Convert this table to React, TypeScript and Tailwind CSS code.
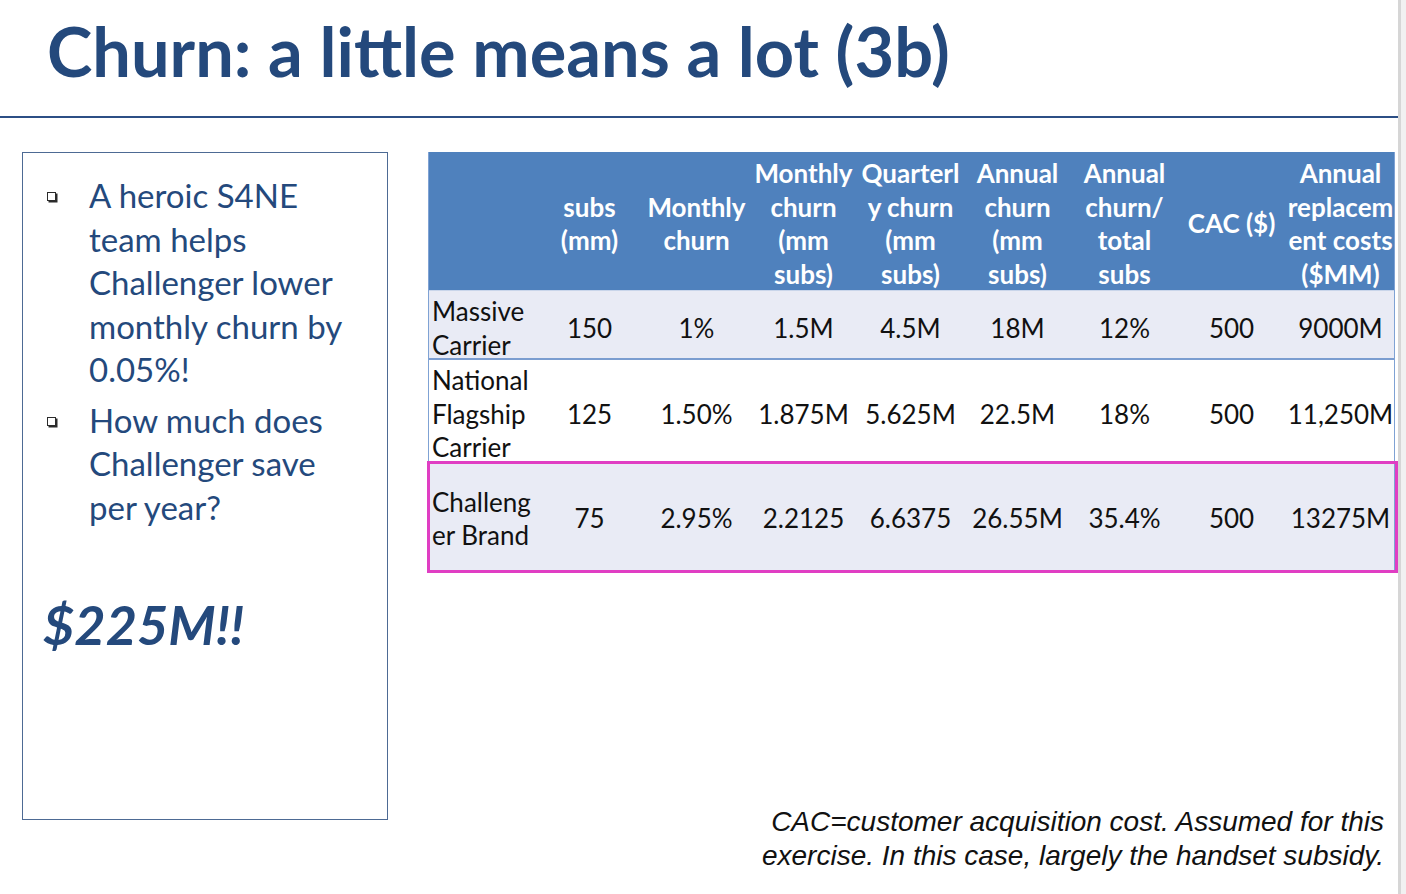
import React from "react";

const headers: string[][] = [
  [],
  ["subs", "(mm)"],
  ["Monthly", "churn"],
  ["Monthly", "churn", "(mm", "subs)"],
  ["Quarterl", "y churn", "(mm", "subs)"],
  ["Annual", "churn", "(mm", "subs)"],
  ["Annual", "churn/", "total", "subs"],
  ["CAC ($)"],
  ["Annual", "replacem", "ent costs", "($MM)"],
];

const rows: { label: string[]; values: string[]; h: string; bg: string }[] = [
  {
    label: ["Massive", "Carrier"],
    values: ["150", "1%", "1.5M", "4.5M", "18M", "12%", "500", "9000M"],
    h: "h-[69px] border-b-2 border-[#7b9dd0]",
    bg: "bg-[#e9ebf5]",
  },
  {
    label: ["National", "Flagship", "Carrier"],
    values: ["125", "1.50%", "1.875M", "5.625M", "22.5M", "18%", "500", "11,250M"],
    h: "h-[102px]",
    bg: "bg-white",
  },
  {
    label: ["Challeng", "er Brand"],
    values: ["75", "2.95%", "2.2125", "6.6375", "26.55M", "35.4%", "500", "13275M"],
    h: "h-[110px]",
    bg: "bg-[#e9ebf5]",
  },
];

const gridCols = "grid grid-cols-[107px_107px_107px_107px_107px_107px_107px_107px_111px]";

function Bullet({ lines }: { lines: string[] }) {
  return (
    <div className="flex">
      <div className="w-[66px] shrink-0 pl-[24px] pt-[18px]">
        {/* hollow shadowed square, like the Wingdings bullet */}
        <div className="w-[9px] h-[9px] border border-[#2b2b2b] shadow-[1.5px_1.5px_0_#2b2b2b]"></div>
      </div>
      <div className="text-[33px] leading-[43.5px] text-[#24497c]">
        {lines.map((l, i) => (
          <div key={i} className="whitespace-nowrap">{l}</div>
        ))}
      </div>
    </div>
  );
}

export default function App() {
  return (
    <div className="flex w-[1406px] h-[894px] bg-white overflow-hidden font-['Lato',sans-serif]">
      <div className="w-[1398px] shrink-0 flex flex-col">
        {/* Title */}
        <div className="h-[118px] pl-[47px] pt-[16px] border-b-2 border-[#2c4f85]">
          <h1 className="text-[68.5px] leading-[70px] font-bold text-[#24497c] whitespace-nowrap">
            Churn: a little means a lot (3b)
          </h1>
        </div>

        <div className="flex pt-[34px]">
          {/* Left text box */}
          <div className="ml-[22px] w-[366px] h-[668px] border border-[#4d6a94] pt-[21px]">
            <Bullet lines={["A heroic S4NE", "team helps", "Challenger lower", "monthly churn by", "0.05%!"]} />
            <div className="mt-[7px]">
              <Bullet lines={["How much does", "Challenger save", "per year?"]} />
            </div>
            <div className="mt-[68px] pl-[20px] text-[54px] leading-[56px] font-bold italic text-[#24497c]">
              $225M!!
            </div>
          </div>

          {/* Table + footnote */}
          <div className="ml-[40px] w-[967px] flex flex-col">
            <div className="border-x border-[#7fa2d4]">
              <div className={`${gridCols} h-[139px] bg-[#4f81bd] text-white font-bold text-[26px] leading-[33.5px] border-b border-[#c9d5ea]`}>
                {headers.map((lines, i) => (
                  <div key={i} className="flex flex-col items-center justify-center pt-[5px]">
                    {lines.map((l, j) => (
                      <div key={j} className="whitespace-nowrap">{l}</div>
                    ))}
                  </div>
                ))}
              </div>
              {rows.map((r, i) => (
                <div key={i} className={`relative ${gridCols} ${r.h} ${r.bg} text-[26px] leading-[33.5px] text-[#111]`}>
                  <div className="flex flex-col justify-center pl-[3px] pt-[4px]">
                    {r.label.map((l, j) => (
                      <div key={j} className="whitespace-nowrap">{l}</div>
                    ))}
                  </div>
                  {r.values.map((v, j) => (
                    <div key={j} className="flex items-center justify-center pt-[4px] whitespace-nowrap">
                      {v}
                    </div>
                  ))}
                  {i === 2 && (
                    <span className="pointer-events-none absolute -left-[2px] -right-[4px] -top-[1px] -bottom-[1px] border-[3px] border-[#e03ec3]"></span>
                  )}
                </div>
              ))}
            </div>

            <div className="mt-[233px] pr-[11px] text-right italic text-[28px] leading-[34px] text-[#111] font-['Liberation_Sans',Arial,sans-serif]">
              <div className="whitespace-nowrap">CAC=customer acquisition cost. Assumed for this</div>
              <div className="whitespace-nowrap">exercise. In this case, largely the handset subsidy.</div>
            </div>
          </div>
        </div>
      </div>
      <div className="flex-1 bg-[#f1f1f1] border-l-[3px] border-[#d6d6d6]"></div>
    </div>
  );
}
